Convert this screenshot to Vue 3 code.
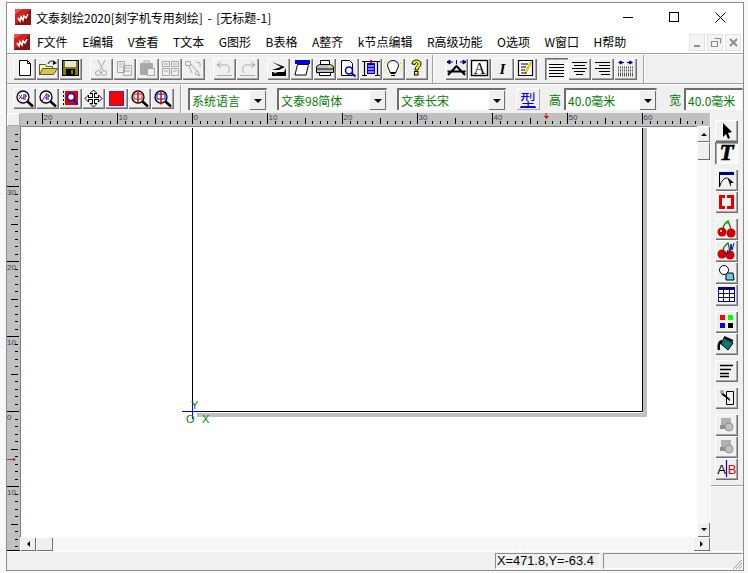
<script setup>
const menus = ['F文件', 'E编辑', 'V查看', 'T文本', 'G图形', 'B表格', 'A整齐', 'k节点编辑', 'R高级功能', 'O选项', 'W窗口', 'H帮助']

// ruler scale: 75px per 10 units, 7.5px per minor tick
const hTicks = []
for (let i = -23; i <= 69; i++) {
  const x = 172 + i * 7.5
  if (x < 0) continue
  hTicks.push({ x: Math.round(x) + 0.5, len: i % 10 === 0 ? 11 : i % 5 === 0 ? 6 : 3, label: i % 10 === 0 ? Math.abs(i) : null })
}
const vTicks = []
for (let i = -37; i <= 18; i++) {
  const y = 285 + i * 7.5
  vTicks.push({ y: Math.round(y) + 0.5, len: i % 10 === 0 ? 12 : i % 5 === 0 ? 7 : 3, label: i % 10 === 0 ? Math.abs(i) : null })
}
const cyanDots = []
for (let y = 10; y < 420; y += 21) cyanDots.push(y)
</script>

<template>
  <div class="screen">
    <div class="window">
      <div class="titlebar">
        <svg class="appicon" viewBox="0 0 16 16"><rect width="16" height="16" fill="#d02420"/><path d="M0 16 16 0v16z" fill="#8c1010"/><path d="M0 5 8 0H0z" fill="#f05048"/><path d="M3 9l2 3 1-4 2 3 1-4 2 2 2-4" fill="none" stroke="#fff" stroke-width="1.6"/></svg>
        <span class="title">文泰刻绘2020[刻字机专用刻绘] - [无标题-1]</span>
        <div class="winctl">
          <svg width="11" height="11" viewBox="0 0 11 11"><path d="M0 5.500h10" stroke="#000"/></svg>
          <svg width="11" height="11" viewBox="0 0 11 11"><rect x=".5" y=".5" width="9" height="9" fill="none" stroke="#000"/></svg>
          <svg width="11" height="11" viewBox="0 0 11 11"><path d="M.5.5l10 10M10.500.5l-10 10" stroke="#000" fill="none"/></svg>
        </div>
      </div>

      <div class="menubar">
        <svg class="appicon menuicon" viewBox="0 0 16 16"><rect width="16" height="16" fill="#d02420"/><path d="M0 16 16 0v16z" fill="#8c1010"/><path d="M0 5 8 0H0z" fill="#f05048"/><path d="M3 9l2 3 1-4 2 3 1-4 2 2 2-4" fill="none" stroke="#fff" stroke-width="1.6"/></svg>
        <span v-for="m in menus" :key="m" class="menuitem">{{ m }}</span>
        <div class="mdi">
          <span class="mdibtn"><svg width="15" height="15" viewBox="0 0 15 15"><path d="M4 11h6" stroke="#8c8c8c" stroke-width="2"/></svg></span>
          <span class="mdibtn"><svg width="15" height="15" viewBox="0 0 15 15"><path d="M6.500 3.500h6v5M3.500 6.500h6v5h-6z" fill="none" stroke="#8c8c8c" stroke-width="1.2"/></svg></span>
          <span class="mdibtn"><svg width="15" height="15" viewBox="0 0 15 15"><path d="M4 4l7 7M11 4l-7 7" stroke="#8c8c8c" stroke-width="2"/></svg></span>
        </div>
      </div>

      <div class="toolbar top">
        <div class="group">
          <button class="tb"><svg viewBox="0 0 23 22"><path d="M6.500 2.500h8l3 3v12h-11z" fill="#fff" stroke="#000"/><path d="M14.500 2.500v3h3" fill="none" stroke="#000"/></svg></button>
          <button class="tb"><svg viewBox="0 0 23 22"><path d="M3.500 6.500h6l1 2h6v8h-13z" fill="#ffff9c" stroke="#555"/><path d="M3.500 16.500l3-6h15l-4 6z" fill="#d8c840" stroke="#555"/><path d="M12 6c1-3 4-4 7-2" fill="none" stroke="#000"/><path d="M21 5l-4 2 0-4z" fill="#000"/></svg></button>
          <button class="tb"><svg viewBox="0 0 23 22"><rect x="3.500" y="2.500" width="16" height="15" fill="#808000" stroke="#000"/><rect x="6" y="3" width="11" height="6" fill="#e8e8d8"/><rect x="7" y="11" width="9" height="6" fill="#000"/><rect x="12" y="12" width="2" height="4" fill="#808000"/></svg></button>
        </div>
        <div class="group g8">
          <button class="tb"><svg viewBox="0 0 23 22" class="off"><path d="M8 2l5 10M15 2l-5 10"/><circle cx="8" cy="15" r="2.500"/><circle cx="14" cy="15" r="2.500"/></svg></button>
          <button class="tb"><svg viewBox="0 0 23 22" class="off"><path d="M4.500 3.500h7v11h-7zM10.500 7.500h8v10h-8zM6 6h4M6 9h3M12 10h5M12 13h5"/></svg></button>
          <button class="tb"><svg viewBox="0 0 23 22"><rect x="4" y="5" width="13" height="12" rx="1" fill="#a8a8a8"/><rect x="8" y="3" width="5" height="3" fill="none" stroke="#a8a8a8"/><rect x="11.500" y="10.500" width="7" height="7" fill="#f0f0f0" stroke="#a8a8a8"/></svg></button>
          <button class="tb"><svg viewBox="0 0 23 22" class="off"><path d="M3.500 3.500h7v5h-7zM12.500 3.500h7v5h-7zM3.500 10.500h7v7h-7zM12.500 10.500h7v7h-7zM5 6h4M14 6h4M5 13h4M14 13h4"/></svg></button>
          <button class="tb"><svg viewBox="0 0 23 22" class="off"><path d="M3.500 3.500h5v4h-5zM14 4l4 1 0 4M15 12l3 6-5-2zM9 6l5 6M7 8l3 7"/></svg></button>
        </div>
        <div class="group g8">
          <button class="tb"><svg viewBox="0 0 23 22" class="off"><path d="M8 4L4 7l4 3M4 7h9c4 0 5 6 1 8M4 17.500h15"/></svg></button>
          <button class="tb"><svg viewBox="0 0 23 22" class="off"><path d="M15 4l4 3-4 3M19 7h-9c-4 0-5 6-1 8M4 17.500h15"/></svg></button>
        </div>
        <div class="group g8">
          <button class="tb"><svg viewBox="0 0 23 22"><path d="M5 4l13 5-6 3H5l9-3z" fill="#000"/><path d="M5 14h12l2-4v8H5z" fill="#000"/><path d="M7 15l10-4" stroke="#fff"/></svg></button>
          <button class="tb"><svg viewBox="0 0 23 22"><rect x="5" y="2" width="15" height="4" fill="#0000e0"/><path d="M7.500 6.500h11l-2.500 10.500h-11z" fill="#fff" stroke="#000"/></svg></button>
          <button class="tb"><svg viewBox="0 0 23 22"><path d="M7.500 2.500h9v5h-9z" fill="#fff" stroke="#000"/><path d="M3.500 8.500l3-2h11l3 2v6h-17z" fill="#c0c0c0" stroke="#000"/><path d="M3 11h18" stroke="#000"/><path d="M6.500 14.500h11v3h-11z" fill="#fff" stroke="#000"/><path d="M15 9h4" stroke="#ff0"/></svg></button>
          <button class="tb"><svg viewBox="0 0 23 22"><path d="M5.500 2.500h8l3 3v12h-11z" fill="#fff" stroke="#000"/><circle cx="13" cy="12.500" r="3.500" fill="#fff" stroke="#0000e0" stroke-width="1.600"/><path d="M15.500 15l4 3.500" stroke="#0000e0" stroke-width="2"/></svg></button>
          <button class="tb"><svg viewBox="0 0 23 22"><path d="M3 3.500h18M5.500 3v15M18.500 3v15" stroke="#000" stroke-width="1.200"/><path d="M3 17.500h5M16 17.500h5" stroke="#000"/><rect x="8" y="5" width="8" height="11" fill="#0000e0"/><path d="M9 8h6M9 11h6M9 14h6" stroke="#fff"/><rect x="11" y="2" width="2" height="3" fill="#e00000"/></svg></button>
          <button class="tb"><svg viewBox="0 0 23 22"><path d="M11 2.500c3.500 0 5.500 2.500 5.500 5 0 3-2.500 4-2.500 7H8c0-3-2.500-4-2.500-7 0-2.500 2-5 5.500-5z" fill="#fff" stroke="#000"/><path d="M8.500 15.500h5M9 17.500h4" stroke="#000"/><path d="M2 4l2 2M20 4l-2 2M1 9h2M19 9h2M2 13l2-1M20 13l-2-1" stroke="#e8e800"/></svg></button>
          <button class="tb"><svg viewBox="0 0 23 22"><path d="M7 6c0-3 2-4 4.500-4S16 3.500 16 6c0 3-3 3-3 6h-3c0-4 3-4 3-6 0-1-.7-1.500-1.500-1.500S10 5 10 6.500z" fill="#ff0" stroke="#000"/><rect x="9.500" y="13.500" width="3.500" height="3.500" fill="#ff0" stroke="#000"/></svg></button>
        </div>
        <div class="sep"></div>
        <div class="group">
          <button class="tb"><svg viewBox="0 0 23 22"><path d="M3 17l8.500-9L20 17M2.500 13.500h18" fill="none" stroke="#000" stroke-width="2"/><path d="M8 4H2M21 4h-6" stroke="#000080"/><path d="M2 4l3-2v4zM21 4l-3-2v4zM11.500 6V2" stroke="#000080" fill="#000080"/></svg></button>
          <button class="tb"><svg viewBox="0 0 23 22"><rect x="3.500" y="2.500" width="16" height="15" fill="#fff" stroke="#000" stroke-width="1.400"/><text x="11.500" y="15.500" class="glyph big">A</text></svg></button>
          <button class="tb"><svg viewBox="0 0 23 22"><text x="11.500" y="16" class="glyph ital">I</text></svg></button>
          <button class="tb"><svg viewBox="0 0 23 22"><path d="M4.500 2.500h14v15h-14z" fill="#fff" stroke="#000" stroke-width="1.200"/><path d="M7 6h7M7 9h5M7 12h4M7 15h5" stroke="#000"/><path d="M17 4l-5 10" stroke="#e8c800" stroke-width="2.500"/><path d="M12 14l-1 2 2-1" fill="#000"/></svg></button>
        </div>
        <div class="group g10">
          <button class="tb down"><svg viewBox="0 0 23 22"><path d="M4 6.500h15M4 9.500h15M4 12.500h15M4 15.500h15M4 18.500h15" stroke="#000" stroke-width="1.200"/></svg></button>
          <button class="tb"><svg viewBox="0 0 23 22"><path d="M4 4.500h15M6 7.500h11M4 10.500h15M6 13.500h11M8 16.500h7" stroke="#000" stroke-width="1.200"/></svg></button>
          <button class="tb"><svg viewBox="0 0 23 22"><path d="M4 4.500h15M8 7.500h11M4 10.500h15M8 13.500h11M10 16.500h9" stroke="#000" stroke-width="1.200"/></svg></button>
          <button class="tb"><svg viewBox="0 0 23 22"><path d="M4 9.500h15M4 12.500h15M4 15.500h15M4 17.500h15" stroke="#555" stroke-dasharray="1 1" stroke-width="2"/><path d="M5 4.500h5M13 4.500h5" stroke="#000080"/><path d="M4 4.500l3-2v4zM19 4.500l-3-2v4zM9 4.500l-2-2v4zM14 4.500l2-2v4z" fill="#000080"/></svg></button>
        </div>
        <div class="sep end"></div>
      </div>

      <div class="toolbar second">
        <div class="group">
          <button class="tb short"><svg viewBox="0 0 23 22"><circle cx="10" cy="9" r="6" fill="#fff" stroke="#000" stroke-width="1.300"/><path d="M14.500 13.500l5.500 5" stroke="#000" stroke-width="2.500"/><path d="M6 7l3 4M9 7l-3 4" stroke="#e00000"/><path d="M10 7h3v2h-3v2h3" fill="none" stroke="#0000e0"/></svg></button>
          <button class="tb short"><svg viewBox="0 0 23 22"><circle cx="10" cy="9" r="6" fill="#fff" stroke="#000" stroke-width="1.300"/><path d="M14.500 13.500l5.500 5" stroke="#000" stroke-width="2.500"/><path d="M6 13l5-8" stroke="#e00000"/><path d="M10 7h3v2h-3v2h3" fill="none" stroke="#0000e0"/></svg></button>
          <button class="tb short"><svg viewBox="0 0 23 22"><rect x="6" y="3" width="13" height="14" fill="#e00000"/><path d="M4.500 3v14" stroke="#000" stroke-dasharray="2 2"/><circle cx="12" cy="9" r="3.500" fill="#fff" stroke="#0000e0" stroke-width="1.600"/><path d="M14.500 12l4 4" stroke="#0000e0" stroke-width="2"/></svg></button>
          <button class="tb short"><svg viewBox="0 0 23 22"><path d="M11.500 4v13M5 10.500h13" stroke="#000" stroke-width="3"/><path d="M11.500 2l3.500 3.500h-7zM11.500 19l3.500-3.500h-7zM3 10.500l3.500-3.500v7zM20 10.500l-3.500-3.500v7z" fill="#fff" stroke="#000"/><path d="M11.500 5v11M6 10.500h11" stroke="#fff"/></svg></button>
          <button class="tb short"><svg viewBox="0 0 23 22"><rect x="4.500" y="3.500" width="14" height="14" fill="#f00" stroke="#6020a0"/></svg></button>
          <button class="tb short"><svg viewBox="0 0 23 22"><circle cx="10" cy="9" r="6" fill="#fff" stroke="#000" stroke-width="1.300"/><path d="M14.500 13.500l5.500 5" stroke="#000" stroke-width="2.500"/><rect x="6" y="6" width="8" height="5" fill="none" stroke="#e00000"/><path d="M10 3v12" stroke="#e00000" stroke-width="1.500"/></svg></button>
          <button class="tb short"><svg viewBox="0 0 23 22"><circle cx="10" cy="9" r="6" fill="#fff" stroke="#000" stroke-width="1.300"/><path d="M14.500 13.500l5.500 5" stroke="#000" stroke-width="2.500"/><rect x="6" y="6" width="8" height="5" fill="none" stroke="#0000e0"/><path d="M10 3v13" stroke="#e00000" stroke-width="1.500"/><path d="M8 14l2 3 2-3" fill="#e00000"/></svg></button>
        </div>
        <div class="sep mid"></div>
        <div class="combo c1"><span>系统语言</span><i class="drop"></i></div>
        <div class="combo c2"><span>文泰98简体</span><i class="drop"></i></div>
        <div class="combo c3"><span>文泰长宋</span><i class="drop"></i></div>
        <button class="xing">型</button>
        <span class="lbl l1">高</span>
        <div class="combo c4"><span>40.0毫米</span><i class="drop"></i></div>
        <span class="lbl l2">宽</span>
        <div class="combo c5"><span>40.0毫米</span></div>
      </div>

      <div class="workspace">
        <div class="docarea">
          <div class="corner"></div>
          <svg class="hruler" width="690" height="13" viewBox="0 0 690 13">
            <g v-for="t in hTicks" :key="t.x">
              <path :d="`M${t.x} ${11 - t.len}v${t.len}`" stroke="#000"/>
              <text v-if="t.label !== null" :x="t.x + 1" y="7" class="rulertext">{{ t.label }}</text>
            </g>
            <path d="M526 0v3" stroke="#d00000"/><path d="M524 3h5l-2.500 3z" fill="#d00000"/>
          </svg>
          <svg class="vruler" width="13" height="425" viewBox="0 0 13 425">
            <g v-for="t in vTicks" :key="t.y">
              <path :d="`M${t.len === 12 ? 0 : 11 - t.len} ${t.y}H${t.len === 12 ? 12 : 11}`" stroke="#000"/>
              <text v-if="t.label !== null" x="0" :y="t.y + 8" class="rulertext">{{ t.label }}</text>
            </g>
            <rect v-for="y in cyanDots" :key="y" x="12" :y="y" width="1" height="3" fill="#40d8e0"/>
            <path d="M0 333.500h6" stroke="#b03040"/><path d="M6 331.500v4l3-2z" fill="#b03040"/>
            <path d="M0 424.500h13" stroke="#000"/>
          </svg>
          <div class="canvas">
            <svg width="677" height="411" viewBox="0 0 677 411">
              <rect x="623" y="2" width="4" height="289" fill="#c0c0c0"/>
              <rect x="177" y="287" width="450" height="4" fill="#c0c0c0"/>
              <path d="M172.500 2V285.500H622.500V2" fill="none" stroke="#000"/>
              <path d="M162 285.500H182M172.500 277V293" stroke="#0000e0"/>
              <text x="171" y="283" class="axis">Y</text>
              <text x="166" y="297" class="axis">O</text>
              <text x="182" y="297" class="axis">X</text>
            </svg>
          </div>
          <div class="vscroll">
            <span class="sbtn up"><i class="arr a-up"></i></span>
            <span class="sbtn thumb"></span>
            <span class="track"></span>
            <span class="sbtn dn"><i class="arr a-down"></i></span>
          </div>
          <div class="hscroll">
            <span class="sbtn lf"><i class="arr a-left"></i></span>
            <span class="sbtn hthumb"></span>
            <span class="track"></span>
            <span class="sbtn rt"><i class="arr a-right"></i></span>
          </div>
        </div>

        <div class="sidebar">
          <div class="sidegroup">
            <button class="tb side"><svg viewBox="0 0 23 22"><path d="M8 3l9 9-4 1 2 5-2 1-2-5-3 3z" fill="#000"/></svg></button>
            <button class="tb side down"><svg viewBox="0 0 23 22"><text x="11.500" y="18" class="glyph tee">T</text></svg></button>
          </div>
          <div class="sidegroup">
            <button class="tb side"><svg viewBox="0 0 23 22"><rect x="4" y="3" width="15" height="3" fill="#000080"/><path d="M4.500 3v15M5 17c1-5 4-8 7-8" fill="none" stroke="#000"/><path d="M12 8l7 6-3 0 0 4z" fill="#000"/></svg></button>
            <button class="tb side"><svg viewBox="0 0 23 22"><path d="M4 4h15v14H4z" fill="#e00000"/><path d="M7 7h9v8H7z" fill="#f0f0f0"/><path d="M10 3h2v5h-2zM10 14h2v5h-2z" fill="#f0f0f0"/></svg></button>
          </div>
          <div class="sidegroup">
            <button class="tb side"><svg viewBox="0 0 23 22"><path d="M8 12c0-4 2-7 5-9 1 3 3 6 3 9" fill="none" stroke="#008000" stroke-width="1.300"/><path d="M9 5l4-2 2 3" fill="#00c000"/><circle cx="7" cy="14" r="4.500" fill="#d00000"/><circle cx="16" cy="15" r="4.500" fill="#d00000"/><circle cx="6" cy="13" r="1" fill="#fff"/></svg></button>
            <button class="tb side"><svg viewBox="0 0 23 22"><path d="M8 12c0-4 2-7 5-9 1 3 1 6 2 9" fill="none" stroke="#008000" stroke-width="1.300"/><path d="M15 12l1-8 1 6 2-7" fill="none" stroke="#0000e0"/><circle cx="7" cy="14" r="4.500" fill="#d00000"/><circle cx="15" cy="15" r="4.500" fill="#d00000"/><path d="M11 17l2-7" stroke="#0000e0"/></svg></button>
            <button class="tb side"><svg viewBox="0 0 23 22"><path d="M11 11l7 0 1 7-8 0z" fill="#60d0e0" stroke="#000"/><circle cx="9" cy="8" r="4.500" fill="#fff" stroke="#000"/></svg></button>
            <button class="tb side"><svg viewBox="0 0 23 22"><rect x="3.500" y="3.500" width="16" height="14" fill="#fff" stroke="#000080"/><rect x="3" y="3" width="17" height="3" fill="#000080"/><path d="M3 9.500h17M3 13.500h17M8.500 5v13M14.500 5v13" stroke="#000080"/></svg></button>
          </div>
          <div class="sidegroup">
            <button class="tb side"><svg viewBox="0 0 23 22"><rect x="5" y="4" width="5" height="5" fill="#f00"/><rect x="13" y="4" width="5" height="5" fill="#0f0"/><rect x="5" y="12" width="5" height="5" fill="#00f"/><rect x="13" y="12" width="5" height="5" fill="#000"/></svg></button>
            <button class="tb side"><svg viewBox="0 0 23 22"><path d="M9 5l9 5-5 7-7-6z" fill="#087878" stroke="#000"/><path d="M9 4l9 4" stroke="#000" stroke-width="2"/><path d="M7 8c-3 1-4 4-3 9" fill="none" stroke="#000" stroke-width="2.500"/></svg></button>
          </div>
          <div class="sidegroup">
            <button class="tb side"><svg viewBox="0 0 23 22"><path d="M5 5.500h13M5 9.500h11M5 13.500h9M5 16.500h9" stroke="#000" stroke-width="1.500"/></svg></button>
          </div>
          <div class="sidegroup">
            <button class="tb side"><svg viewBox="0 0 23 22"><path d="M11.500 4.500h7v13h-7z" fill="#f0f0f0" stroke="#000"/><path d="M7 5l8 7v2l-9-7z" fill="#000"/><circle cx="7" cy="5" r="2" fill="#a0a0a0"/></svg></button>
          </div>
          <div class="sidegroup">
            <button class="tb side"><svg viewBox="0 0 23 22"><rect x="6" y="4" width="10" height="9" fill="#b0b0b0"/><rect x="5" y="11" width="5" height="4" fill="#909090"/><circle cx="14" cy="13" r="4" fill="#c0c0c0" stroke="#909090"/></svg></button>
            <button class="tb side"><svg viewBox="0 0 23 22"><rect x="6" y="4" width="10" height="9" fill="#b0b0b0"/><rect x="5" y="11" width="5" height="4" fill="#909090"/><circle cx="14" cy="13" r="4" fill="#c0c0c0" stroke="#909090"/></svg></button>
            <button class="tb side"><svg viewBox="0 0 23 22"><text x="6.500" y="16" class="glyph ab">A</text><text x="17" y="16" class="glyph ab red">B</text><path d="M11.500 2v17" stroke="#0000c0" stroke-width="1.200"/></svg></button>
          </div>
          <div class="sideline"></div>
        </div>
      </div>

      <div class="statusbar">
        <span class="panel coords">X=471.8,Y=-63.4</span>
        <span class="panel rest"></span>
        <svg class="grip" width="11" height="11" viewBox="0 0 11 11"><path d="M10 1L1 10M10 4l-6 6M10 7l-3 3" stroke="#a0a0a0" fill="none"/></svg>
      </div>
    </div>
  </div>
</template>

<style>
html, body { margin: 0; }
</style>

<style scoped>
.screen {
  width: 748px;
  height: 573px;
  box-sizing: border-box;
  padding: 2px 4px 2px 6px;
  background: #f8f8f8;
  font-family: "Noto Sans CJK SC", "Liberation Sans", sans-serif;
  font-size: 12px;
  color: #000;
  overflow: hidden;
}
.window {
  height: 100%;
  box-sizing: border-box;
  border: 1px solid #8c8c8c;
  display: flex;
  flex-direction: column;
  background: #f0f0f0;
}
.titlebar {
  height: 28px;
  flex: none;
  display: flex;
  align-items: center;
  background: #fff;
  padding-left: 8px;
}
.appicon { width: 16px; height: 16px; }
.title { margin-left: 5px; line-height: 16px; margin-top: 2px; word-spacing: 2px; }
.winctl {
  margin-left: auto;
  display: flex;
  gap: 35px;
  padding-right: 17px;
}
.menubar {
  height: 23px;
  box-sizing: border-box;
  flex: none;
  display: flex;
  align-items: center;
  background: #fff;
  padding-left: 7px;
  border-bottom: 1px solid #a0a0a0;
}
.menuicon { margin-right: 7px; }
.menuitem {
  margin-right: 14.5px;
  line-height: 16px;
  white-space: nowrap;
}
.mdi { margin-left: auto; display: flex; gap: 2px; padding-right: 2px; }
.mdibtn {
  width: 16px;
  height: 17px;
  display: flex;
  align-items: center;
  justify-content: center;
  background: #f4f4f4;
  box-shadow: inset 0 0 0 1px #e4e4e4;
}
.toolbar {
  flex: none;
  display: flex;
  align-items: flex-start;
  box-sizing: border-box;
  border-top: 1px solid #fff;
}
.toolbar.top {
  height: 30px;
  padding: 3px 0 0 6px;
  border-bottom: 1px solid #a0a0a0;
}
.toolbar.second {
  height: 29px;
  padding: 3px 0 0 6px;
}
.group { display: flex; }
.g8 { margin-left: 8px; }
.g10 { margin-left: 8px; }
.sep {
  width: 2px;
  height: 28px;
  margin: -3px 11px 0 4px;
  border-left: 1px solid #a0a0a0;
  border-right: 1px solid #fff;
  box-sizing: border-box;
  flex: none;
}
.sep.end { margin-left: 6px; margin-right: 0; }
.sep.mid { margin: -3px 6px 0 6px; }
.tb {
  width: 23px;
  height: 22px;
  padding: 0;
  border: 0;
  background: #f0f0f0;
  box-shadow: inset 1px 1px 0 #fff, inset -1px -1px 0 #6e6e6e, inset -2px -2px 0 #a8a8a8;
  display: block;
}
.tb.short { height: 21px; }
.tb svg { display: block; width: 23px; height: 22px; }
.tb.down {
  background: repeating-conic-gradient(#f0f0f0 0 25%, #fff 0 50%) 0 0 / 2px 2px;
  box-shadow: inset 1px 1px 0 #6e6e6e, inset 2px 2px 0 #a8a8a8, inset -1px -1px 0 #fff;
}
.off { fill: none; stroke: #a8a8a8; }
.glyph { text-anchor: middle; font-family: "Liberation Serif", serif; fill: #000; }
.big { font-size: 16px; }
.ital { font-size: 15px; font-style: italic; font-weight: bold; }
.tee { font-size: 23px; font-style: italic; font-weight: bold; stroke: #000; stroke-width: .6px; }
.ab { font-family: "Liberation Sans", sans-serif; font-size: 13px; }
.red { fill: #e00000; }

.combo {
  height: 22px;
  box-sizing: border-box;
  background: #fff;
  display: flex;
  align-items: center;
  color: #008000;
  border-top: 2px solid #6e6e6e;
  border-left: 2px solid #6e6e6e;
  border-right: 1px solid #e8e8e8;
  position: relative;
  flex: none;
}
.combo span { padding-left: 2px; margin-top: 2px; line-height: 16px; white-space: nowrap; }
.drop {
  margin-left: auto;
  width: 17px;
  height: 100%;
  background: #f0f0f0;
  box-shadow: inset 1px 1px 0 #fff, inset -1px -1px 0 #6e6e6e;
  position: relative;
}
.drop::after {
  content: "";
  position: absolute;
  left: 5px;
  top: 9px;
  border: 4px solid transparent;
  border-top: 4px solid #000;
  border-bottom: 0;
}
.c1 { width: 79px; }
.c2 { width: 110px; margin-left: 10px; }
.c3 { width: 109px; margin-left: 10px; }
.c4 { width: 93px; }
.c5 { width: 59px; margin-left: 3px; }
.xing {
  width: 24px;
  height: 22px;
  margin-left: 10px;
  padding: 0;
  border: 0;
  background: #f0f0f0;
  box-shadow: inset 1px 1px 0 #fff, inset -1px -1px 0 #a8a8a8;
  color: #0000e0;
  font: 16px/20px "Noto Sans CJK SC", sans-serif;
  text-decoration: underline;
}
.lbl { color: #008000; line-height: 16px; margin-top: 4px; }
.l1 { margin-left: 9px; margin-right: 3px; }
.l2 { margin-left: 12px; }

.workspace {
  flex: 1;
  min-height: 0;
  display: flex;
}
.docarea {
  width: 703px;
  display: grid;
  grid-template-columns: 13px 677px 13px;
  grid-template-rows: 13px 411px 14px;
}
.corner { background: #f0f0f0; box-shadow: inset 1px 1px 0 #fff, inset -1px -1px 0 #a8a8a8; }
.hruler { grid-column: 2 / 4; background: #c0c0c0; display: block; }
.vruler { grid-column: 1; grid-row: 2 / 4; background: #c0c0c0; display: block; }
.rulertext { font: 8px "Liberation Sans", sans-serif; fill: #404060; }
.axis { font: 11px "Liberation Sans", sans-serif; fill: #008000; }
.canvas {
  background: #fff;
  grid-column: 2;
  grid-row: 2;
  overflow: hidden;
  box-shadow: inset 1px 1px 0 #808080;
}
.canvas svg { display: block; }
.vscroll {
  grid-column: 3;
  grid-row: 2;
  display: flex;
  flex-direction: column;
}
.hscroll {
  grid-column: 2 / 4;
  grid-row: 3;
  display: flex;
}
.track {
  flex: 1;
  background: repeating-conic-gradient(#f0f0f0 0 25%, #fff 0 50%) 0 0 / 2px 2px;
}
.sbtn {
  background: #f0f0f0;
  box-shadow: inset 1px 1px 0 #fff, inset -1px -1px 0 #6e6e6e;
  display: flex;
  align-items: center;
  justify-content: center;
  flex: none;
}
.up { height: 16px; }
.thumb { height: 18px; }
.dn { height: 15px; }
.lf { width: 16px; }
.hthumb { width: 17px; }
.rt { width: 17px; }
.arr { width: 0; height: 0; border: 3px solid transparent; }
.a-up { border-top: 0; border-bottom-color: #000; }
.a-down { border-bottom: 0; border-top-color: #000; }
.a-left { border-left: 0; border-right-color: #000; }
.a-right { border-right: 0; border-left-color: #000; }

.sidebar {
  flex: 1;
  border-left: 1px solid #fff;
  padding: 7px 0 0 4px;
  background: #f0f0f0;
  display: flex;
  flex-direction: column;
  gap: 5px;
}
.sidegroup { display: flex; flex-direction: column; }
.sideline {
  height: 1px;
  margin: 0 0 0 -4px;
  background: #a0a0a0;
  box-shadow: 0 1px 0 #fff;
}
.statusbar {
  height: 19px;
  flex: none;
  display: flex;
  align-items: center;
  padding-left: 488px;
  gap: 3px;
  position: relative;
  border-top: 1px solid #fff;
  box-sizing: border-box;
}
.panel {
  height: 16px;
  box-sizing: border-box;
  border-top: 1px solid #8c8c8c;
  border-left: 1px solid #8c8c8c;
  border-bottom: 1px solid #fff;
  border-right: 1px solid #fff;
  line-height: 14px;
  white-space: nowrap;
}
.coords { width: 105px; padding-left: 1px; font: 12.8px/14px "Liberation Sans", sans-serif; }
.rest { flex: 1; }
.grip { position: absolute; right: 0; bottom: 0; }
</style>
